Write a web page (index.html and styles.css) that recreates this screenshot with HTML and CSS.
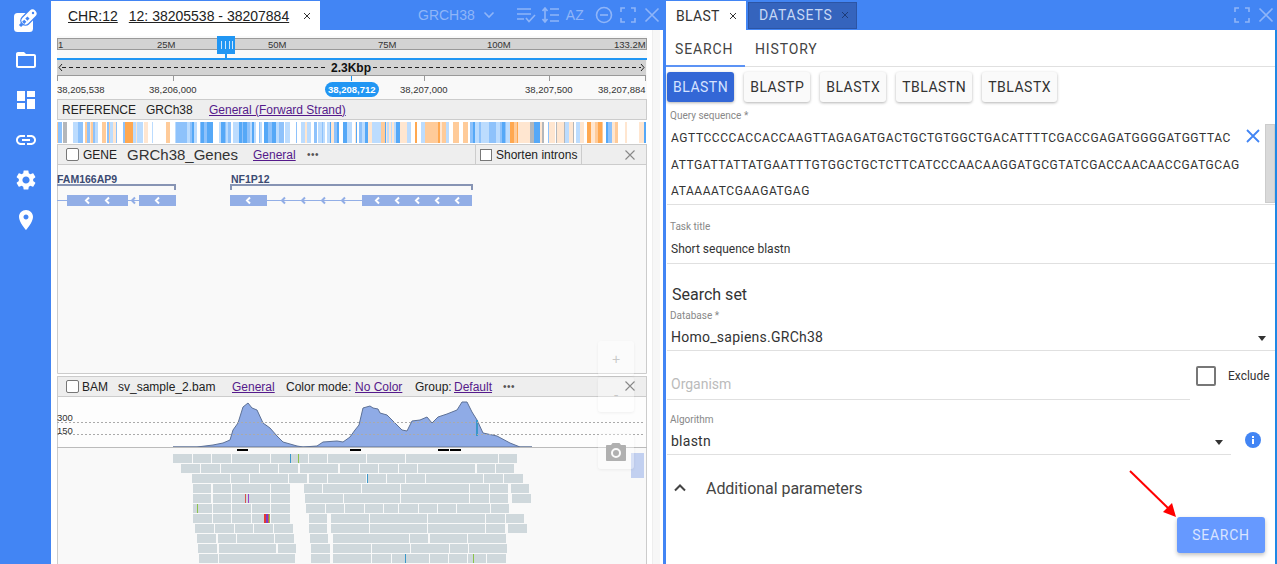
FILE: index.html
```html
<!DOCTYPE html>
<html lang="en">
<head>
  <meta charset="UTF-8" />
  <meta name="viewport" content="width=device-width, initial-scale=1.0"/>
  <title>NGB BLAST</title>
  <link rel="stylesheet" href="styles.css">
</head>
<body>

<nav class="sidebar">
  <svg class="logo" width="24" height="24" viewBox="0 0 24 24">
    <rect x="0" y="5" width="19" height="19" rx="3.500" fill="#fff"/>
    <path d="M11.500 12.500 L18.500 5.500" stroke="#4285f4" stroke-width="10.500" stroke-linecap="round"/>
    <path d="M11.500 12.500 L18.500 5.500" stroke="#fff" stroke-width="8" stroke-linecap="round"/>
    <path d="M6 18 L14.500 9.500" stroke="#4285f4" stroke-width="3" stroke-dasharray="3 1.500"/>
    <circle cx="19" cy="5" r="1.200" fill="#4285f4"/>
  </svg>
  <svg class="nav-icon" viewBox="0 0 24 24"><path d="M10 4H4c-1.1 0-2 .9-2 2v12c0 1.1.9 2 2 2h16c1.1 0 2-.9 2-2V8c0-1.1-.9-2-2-2h-8l-2-2zM20 18H4V8h16v10z"/></svg>
  <svg class="nav-icon" viewBox="0 0 24 24"><path d="M3 13h8V3H3v10zm0 8h8v-6H3v6zm10 0h8V11h-8v10zm0-18v6h8V3h-8z"/></svg>
  <svg class="nav-icon" viewBox="0 0 24 24"><path d="M3.9 12c0-1.71 1.39-3.1 3.1-3.1h4V7H7c-2.76 0-5 2.24-5 5s2.24 5 5 5h4v-1.9H7c-1.71 0-3.1-1.39-3.1-3.1zM8 13h8v-2H8v2zm9-6h-4v1.9h4c1.71 0 3.1 1.39 3.1 3.1s-1.39 3.1-3.1 3.1h-4V17h4c2.76 0 5-2.24 5-5s-2.24-5-5-5z"/></svg>
  <svg class="nav-icon" viewBox="0 0 24 24"><path d="M19.14 12.94c.04-.3.06-.61.06-.94 0-.32-.02-.64-.07-.94l2.03-1.58c.18-.14.23-.41.12-.61l-1.92-3.32c-.12-.22-.37-.29-.59-.22l-2.39.96c-.5-.38-1.03-.7-1.62-.94l-.36-2.54c-.04-.24-.24-.41-.48-.41h-3.84c-.24 0-.43.17-.47.41l-.36 2.54c-.59.24-1.13.57-1.62.94l-2.39-.96c-.22-.08-.47 0-.59.22L2.74 8.87c-.12.21-.08.47.12.61l2.03 1.58c-.05.3-.09.63-.09.94s.02.64.07.94l-2.03 1.58c-.18.14-.23.41-.12.61l1.92 3.32c.12.22.37.29.59.22l2.39-.96c.5.38 1.03.7 1.62.94l.36 2.54c.05.24.24.41.48.41h3.84c.24 0 .44-.17.47-.41l.36-2.54c.59-.24 1.13-.56 1.62-.94l2.39.96c.22.08.47 0 .59-.22l1.92-3.32c.12-.22.07-.47-.12-.61l-2.01-1.58zM12 15.6c-1.98 0-3.6-1.62-3.6-3.6s1.62-3.6 3.6-3.6 3.6 1.62 3.6 3.6-1.62 3.6-3.6 3.6z"/></svg>
  <svg class="nav-icon" viewBox="0 0 24 24"><path d="M12 2C8.13 2 5 5.13 5 9c0 5.25 7 13 7 13s7-7.75 7-13c0-3.87-3.13-7-7-7zm0 9.5c-1.38 0-2.5-1.12-2.5-2.5s1.12-2.5 2.5-2.5 2.5 1.12 2.5 2.5-1.12 2.5-2.5 2.5z"/></svg>
</nav>

<main class="browser">
  <div class="topbar">
    <div class="browser-tab">
      <span class="tab-link">CHR:12</span>
      <span class="tab-link">12: 38205538 - 38207884</span>
      <svg class="tab-x" viewBox="0 0 10 10"><path d="M2 2 L8 8 M8 2 L2 8"/></svg>
    </div>
    <span class="ref-name">GRCH38</span>
    <svg class="tool chevron" viewBox="0 0 12 8"><path d="M1.5 1.5 L6 6 L10.5 1.5"/></svg>
    <svg class="tool tool-sort" viewBox="0 0 20 16"><path d="M1 2 H15 M1 7 H15 M1 12 H8 M10 11 L13 14.5 L19 8"/></svg>
    <svg class="tool tool-spacing" viewBox="0 0 18 16"><path d="M3 1 V15 M0.5 4 L3 1 L5.500 4 M0.500 12 L3 15 L5.500 12 M8 2 H17 M8 8 H17 M8 14 H17"/></svg>
    <span class="tool-az">AZ</span>
    <svg class="tool tool-minus" viewBox="0 0 18 18"><circle cx="9" cy="9" r="7.500"/><path d="M5 9 H13"/></svg>
    <svg class="tool tool-full" viewBox="0 0 16 16"><path d="M1 5 V1 H5 M11 1 H15 V5 M15 11 V15 H11 M5 15 H1 V11"/></svg>
    <svg class="tool tool-close" viewBox="0 0 16 16"><path d="M1.500 1.500 L14.500 14.500 M14.500 1.500 L1.500 14.500"/></svg>
  </div>

  <div class="workspace">
    <div class="tracks">
      <svg class="ruler" width="590" height="63" viewBox="57 36 590 63">
        <rect x="57" y="36" width="590" height="63" fill="#f9f9f9"/>
        <rect x="57.500" y="38.500" width="589" height="11" fill="#d3d3d3" stroke="#999"/>
        <g class="scale-text">
          <text x="58" y="48">1</text>
          <text x="157" y="48">25M</text>
          <text x="268" y="48">50M</text>
          <text x="378" y="48">75M</text>
          <text x="487" y="48">100M</text>
          <text x="614" y="48">133.2M</text>
        </g>
        <rect x="217" y="36" width="18" height="18" fill="#2196f3"/>
        <rect x="225" y="54" width="2" height="4" fill="#2196f3"/>
        <path d="M221.500 41 V49 M225.500 41 V49 M229.500 41 V49 M232.500 41 V49" stroke="#cfe6fb"/>
        <rect x="57" y="58" width="590" height="2" fill="#2196f3"/>
        <rect x="57" y="60" width="589" height="15" fill="#d3d3d3"/>
        <rect x="57" y="75" width="589" height="1" fill="#999"/>
        <path d="M62 67.500 H326 M373 67.500 H641" stroke="#222" stroke-dasharray="4 3"/>
        <path d="M62 64 L59 67.500 L62 71 M641 64 L644 67.500 L641 71" stroke="#222" fill="none"/>
        <text class="range-size" x="331" y="72">2.3Kbp</text>
        <path d="M57.500 76 V81 M173.500 76 V81 M424.500 76 V81 M549.500 76 V81 M645.500 76 V81" stroke="#999"/>
        <path d="M351.500 76 V81" stroke="#2196f3"/>
        <g class="scale-text">
          <text x="57" y="93">38,205,538</text>
          <text x="149" y="93">38,206,000</text>
          <text x="400" y="93">38,207,000</text>
          <text x="525" y="93">38,207,500</text>
          <text x="598" y="93">38,207,884</text>
        </g>
        <rect x="325" y="82" width="54" height="15" rx="7.500" fill="#2196f3"/>
        <text class="pill-text" x="328" y="93">38,208,712</text>
      </svg>

      <div class="track-head ref-head">
        <span class="w-ref">REFERENCE</span>
        <span class="w-ref-name">GRCh38</span>
        <a class="link">General (Forward Strand)</a>
      </div>
      <svg id="stripes" class="stripes" width="590" height="22" viewBox="57 122 590 22"></svg>

      <div class="track-head gene-head">
        <span class="check"></span>
        <span class="w-gene">GENE</span>
        <span class="gene-name">GRCh38_Genes</span>
        <a class="link w-general">General</a>
        <span class="dots">•••</span>
        <div class="shorten"><span class="check small"></span>Shorten introns</div>
        <div class="head-close"><svg class="x-grey" viewBox="0 0 10 10"><path d="M0.500 0.500 L9.500 9.500 M9.500 0.500 L0.500 9.500"/></svg></div>
      </div>

      <svg class="gene-track" width="590" height="209" viewBox="57 165 590 209">
        <path d="M57.500 165 V373.500 H646.500 V165" fill="none" stroke="#ccc"/>
        <text class="gene-label" x="57" y="183">FAM166AP9</text>
        <path class="bracket" d="M57 185 H175 V190"/>
        <path d="M57 200.500 H139" stroke="#92aee6"/>
        <rect x="67" y="195" width="61" height="11" fill="#92aee6"/>
        <rect x="139" y="195" width="37" height="11" fill="#92aee6"/>
        <text class="gene-label" x="231" y="183">NF1P12</text>
        <path class="bracket" d="M231 190 V185 H472 V190"/>
        <path d="M230 200.500 H362" stroke="#92aee6"/>
        <rect x="230" y="195" width="37" height="11" fill="#92aee6"/>
        <rect x="362" y="195" width="110" height="11" fill="#92aee6"/>
        <path class="chev white" d="M89 197.500 L86 200.500 L89 203.500 M109 197.500 L106 200.500 L109 203.500 M159 197.500 L156 200.500 L159 203.500 M250 197.500 L247 200.500 L250 203.500 M379 197.500 L376 200.500 L379 203.500 M399 197.500 L396 200.500 L399 203.500 M419 197.500 L416 200.500 L419 203.500 M439 197.500 L436 200.500 L439 203.500 M459 197.500 L456 200.500 L459 203.500"/>
        <path class="chev blue" d="M135 197.500 L132 200.500 L135 203.500 M285 197.500 L282 200.500 L285 203.500 M305 197.500 L302 200.500 L305 203.500 M325 197.500 L322 200.500 L325 203.500 M345 197.500 L342 200.500 L345 203.500"/>
      </svg>

      <div class="track-head bam-head">
        <span class="check"></span>
        <span class="w-bam">BAM</span>
        <span class="w-file">sv_sample_2.bam</span>
        <a class="link w-general2">General</a>
        <span class="w-mode">Color mode:</span>
        <a class="link w-color">No Color</a>
        <span class="w-group">Group:</span>
        <a class="link w-default">Default</a>
        <span class="dots">•••</span>
      </div>

      <svg id="bam" class="bam-track" width="590" height="167" viewBox="57 397 590 167">
        <path d="M57.500 397 V564 M646.500 397 V564" stroke="#ccc"/>
        <rect x="58" y="397" width="588" height="50" fill="#fdfdfd"/>
        <polygon fill="#8fabe6" stroke="#5d7196" points="173,447 197,447 205,446 213,445 223,443 230,440 233,430 238,423 243,407 248,403 252,408 257,410 263,423 270,428 277,436 283,442 297,446 303,447 317,446 323,442 337,441 343,442 350,437 355,430 359,425 363,408 370,406 373,408 378,409 380,413 387,415 395,423 402,430 407,431 412,421 420,420 427,417 432,423 438,417 447,414 457,410 462,402 467,402 472,412 477,420 483,433 497,436 510,443 520,447 532,447"/>
        <rect x="476" y="420" width="2" height="16" fill="#3b97c9"/>
        <path d="M57 422.500 H643 M57 434.500 H643" stroke="#aaa" stroke-dasharray="2 2"/>
        <text class="scale-text" x="57" y="421">300</text>
        <text class="scale-text" x="57" y="434">150</text>
        <rect x="57" y="447" width="590" height="1" fill="#bbb"/>
        <path d="M237 450 H248 M350 450 H361 M438 450 H449 M450 450 H461" stroke="#000" stroke-width="2"/>
        <rect x="631" y="453" width="13" height="25" fill="#c2d0f0"/>
      </svg>

      <!-- floating zoom widget -->
      <div class="zoom-panel">
        <div class="zoom-btn">+</div>
        <div class="zoom-btn">-</div>
        <div class="zoom-btn camera">
          <svg width="20" height="18" viewBox="0 0 20 18"><path fill="#b0b0b0" d="M6.500 0 L5 2 H1 C.4 2 0 2.500 0 3 V17 C0 17.500 .4 18 1 18 H19 C19.600 18 20 17.500 20 17 V3 C20 2.500 19.600 2 19 2 H15 L13.500 0 Z M10 5 A5 5 0 1 1 10 15 A5 5 0 1 1 10 5 Z M10 7 A3 3 0 1 0 10 13 A3 3 0 1 0 10 7 Z"/></svg>
        </div>
      </div>
      <svg class="x-grey bam-close" viewBox="0 0 10 10"><path d="M0.500 0.500 L9.500 9.500 M9.500 0.500 L0.500 9.500"/></svg>
    </div>
    <div class="track-scroll"></div>
  </div>
</main>

<section class="blast">
  <div class="topbar blast-top">
    <div class="blast-tab">BLAST <svg class="tab-x" viewBox="0 0 10 10"><path d="M2 2 L8 8 M8 2 L2 8"/></svg></div>
    <div class="data-tab">DATASETS <svg class="tab-x dim" viewBox="0 0 10 10"><path d="M2 2 L8 8 M8 2 L2 8"/></svg></div>
    <svg class="tool tool-full right" viewBox="0 0 16 16"><path d="M1 5 V1 H5 M11 1 H15 V5 M15 11 V15 H11 M5 15 H1 V11"/></svg>
    <svg class="tool tool-close" viewBox="0 0 16 16"><path d="M1.500 1.500 L14.500 14.500 M14.500 1.500 L1.500 14.500"/></svg>
  </div>
  <div class="subtabs">
    <div class="subtab active">SEARCH</div>
    <div class="subtab">HISTORY</div>
  </div>
  <div class="form">
    <div class="modes">
      <button class="mode active">BLASTN</button>
      <button class="mode">BLASTP</button>
      <button class="mode">BLASTX</button>
      <button class="mode">TBLASTN</button>
      <button class="mode">TBLASTX</button>
    </div>
    <div class="field query">
      <label>Query sequence *</label>
      <div class="query-text">
        <div>AGTTCCCCACCACCAAGTTAGAGATGACTGCTGTGGCTGACATTTTCGACCGAGATGGGGATGGTTAC</div>
        <div>ATTGATTATTATGAATTTGTGGCTGCTCTTCATCCCAACAAGGATGCGTATCGACCAACAACCGATGCAG</div>
        <div>ATAAAATCGAAGATGAG</div>
      </div>
      <svg class="query-clear" viewBox="0 0 14 14"><path d="M1 1 L13 13 M13 1 L1 13"/></svg>
      <div class="query-scroll"></div>
    </div>
    <div class="field task">
      <label>Task title</label>
      <div class="value small">Short sequence blastn</div>
    </div>
    <h3 class="set-title">Search set</h3>
    <div class="field database">
      <label>Database *</label>
      <div class="value">Homo_sapiens.GRCh38<span class="caret"></span></div>
    </div>
    <div class="organism-row">
      <div class="organism">Organism</div>
      <span class="big-check"></span>
      <span class="exclude">Exclude</span>
    </div>
    <div class="algo-row">
      <div class="field algo">
        <label>Algorithm</label>
        <div class="value">blastn<span class="caret"></span></div>
      </div>
      <svg class="info" viewBox="0 0 16 16"><circle cx="8" cy="8" r="8" fill="#4285f4"/><rect x="7" y="7" width="2" height="5" fill="#fff"/><rect x="7" y="4" width="2" height="2" fill="#fff"/></svg>
    </div>
    <div class="additional">
      <svg class="up" viewBox="0 0 12 8"><path d="M1 6.500 L6 1.500 L11 6.500"/></svg>
      Additional parameters
    </div>
    <div class="actions"><button class="search-btn">SEARCH</button></div>
  </div>
</section>

<svg class="red-arrow" width="52" height="50" viewBox="0 0 52 50">
  <path d="M1 1 L40 39" stroke="#f00" stroke-width="2"/>
  <path d="M47 47 L34 42 L43 33 Z" fill="#f00"/>
</svg>

<script src="script.js"></script>
</body>
</html>
```

FILE: styles.css
```css
* { box-sizing: border-box; }
body {
  margin: 0; height: 100vh; display: flex; overflow: hidden;
  background: white; font-family: "Liberation Sans", Arial, sans-serif; color: #222;
}

/* left nav */
.sidebar {
  width: 51px; flex: none; background: #4285f4;
  display: flex; flex-direction: column; align-items: center;
  padding-top: 8px;
}
.logo { margin-bottom: 16px; flex: none; }
.nav-icon { width: 24px; height: 24px; fill: white; margin-bottom: 16px; flex: none; }

/* shared header bar */
.topbar {
  height: 30px; background: #4285f4; display: flex; align-items: center; flex: none;
}
.tool { fill: none; stroke: #8fb5f8; stroke-width: 1.6; flex: none; }

.browser { width: 612px; flex: none; display: flex; flex-direction: column; }
.browser-tab {
  width: 269px; height: 29px; margin-top: 1px; background: white;
  display: flex; align-items: center; padding-left: 17px; font-size: 14px; color: #222;
}
.tab-link { text-decoration: underline; margin-right: 11px; }
.tab-x { width: 10px; height: 10px; fill: none; stroke: #333; stroke-width: 1; flex: none; }
.browser-tab .tab-x { margin-left: 2px; }
.ref-name { margin-left: 98px; font-size: 14px; color: #8fb5f8; }
.chevron { width: 12px; height: 8px; margin-left: 8px; }
.tool-sort { width: 20px; height: 16px; margin-left: 21px; }
.tool-spacing { width: 18px; height: 16px; margin-left: 6px; }
.tool-az { font-size: 14px; color: #8fb5f8; margin-left: 6px; width: 19px; }
.tool-minus { width: 18px; height: 18px; margin-left: 10px; }
.tool-full { width: 16px; height: 16px; margin-left: 7px; }
.tool-close { width: 16px; height: 16px; margin-left: 8px; }

.workspace { flex: 1; display: flex; min-height: 0; }
.tracks { width: 601px; padding: 6px 5px 0 6px; position: relative; background: white; }
.track-scroll { width: 8px; background: #f7f7f7; border-left: 1px solid #eee; }
.ruler, .stripes, .gene-track, .bam-track { display: block; }

.track-head {
  width: 590px; height: 21px; background: #eee; border: 1px solid #ccc;
  display: flex; align-items: center; font-size: 12px; white-space: nowrap;
}
.ref-head { padding-left: 4px; margin-bottom: 2px; }
.w-ref { width: 84px; }
.w-ref-name { width: 63px; }
.link { color: #551a8b; text-decoration: underline; }
.gene-head { padding-left: 8px; }
.check {
  width: 13px; height: 13px; background: white; border: 1px solid #777; border-radius: 2px; flex: none;
}
.w-gene { margin-left: 4px; width: 44px; }
.gene-name { font-size: 15px; width: 126px; color: #333; }
.w-general { width: 54px; }
.dots { font-size: 10px; color: #555; letter-spacing: 0.500px; }
.shorten {
  margin-left: 156px; width: 107px; height: 100%; border-left: 1px solid #ccc; border-right: 1px solid #ccc;
  display: flex; align-items: center; padding-left: 4px; gap: 4px;
}
.check.small { width: 12px; height: 12px; border-radius: 0; }
.head-close { flex: 1; display: flex; justify-content: flex-end; padding-right: 11px; }
.x-grey { width: 10px; height: 10px; fill: none; stroke: #888; stroke-width: 1.100; }

.gene-track { background: #f9f9f9; }
.gene-label { font: bold 10.500px "Liberation Sans", Arial, sans-serif; fill: #3b4a72; }
.bracket { fill: none; stroke: #8794b4; stroke-width: 2; }
.chev { fill: none; stroke-width: 2; }
.chev.white { stroke: white; }
.chev.blue { stroke: #92aee6; }

.bam-head { padding-left: 8px; margin-top: 2px; }
.w-bam { margin-left: 3px; width: 36px; }
.w-file { width: 114px; }
.w-general2 { width: 54px; }
.w-mode { width: 69px; }
.w-color { width: 60px; }
.w-group { width: 39px; }
.w-default { width: 49px; }

.bam-track { background: #f9f9f9; }
.scale-text text, text.scale-text { font: 9.500px "Liberation Sans", Arial, sans-serif; fill: #333; }
.range-size { font: bold 12px "Liberation Sans", Arial, sans-serif; fill: #111; }
.pill-text { font: bold 9.500px "Liberation Sans", Arial, sans-serif; fill: white; }

/* over the tracks */
.zoom-panel { position: absolute; left: 547px; top: 311px; width: 36px; display: flex; flex-direction: column; }
.zoom-btn {
  height: 35px; margin-bottom: 1px; border-radius: 3px;
  background: rgba(255,255,255,0.35); box-shadow: 0 1px 3px rgba(0,0,0,0.06);
  display: flex; align-items: center; justify-content: center; color: #c8c8c8; font-size: 14px;
}
.zoom-btn.camera { margin-top: 21px; }
.bam-close { position: absolute; left: 574px; top: 351px; }

/* blast panel */
.blast {
  flex: 1; min-width: 0; display: flex; flex-direction: column;
  border-left: 3px solid #4285f4; border-right: 2px solid #1e88e5;
  font-family: Roboto, sans-serif; color: #333;
}
.blast-top { margin-right: -2px; }
.blast-tab {
  width: 80px; height: 29px; margin-top: 1px; background: white; font-size: 14px; letter-spacing: 0.300px;
  display: flex; align-items: center; padding-left: 10px; gap: 8px;
}
.data-tab {
  width: 109px; height: 27px; margin-left: 2px; background: #3564bd; border: 1px solid #2c55a5;
  color: #c7d8f5; font-size: 14px; letter-spacing: 0.800px;
  display: flex; align-items: center; padding-left: 10px; gap: 7px;
}
.tab-x.dim { stroke: #1d3b78; }
.tool-full.right { margin-left: auto; }
.blast-top .tool-close { margin-right: 3px; }

.subtabs { height: 37px; display: flex; border-bottom: 1px solid #e0e0e0; flex: none; }
.subtab { width: 79px; padding-left: 9px; font-size: 14px; line-height: 38px; letter-spacing: 0.850px; color: #444; }
.subtab + .subtab { width: auto; padding-left: 10px; }
.subtab.active { border-bottom: 2px solid #5c93f5; height: 37px; }

.form { flex: 1; display: flex; flex-direction: column; padding: 5px 0 0 1px; min-height: 0; }
.modes { display: flex; gap: 10px; flex: none; }
.mode {
  height: 30px; padding: 0 6px; border: none; border-radius: 3px; background: #fafafa; color: #333;
  font: 14px Roboto, sans-serif; letter-spacing: 0.500px; box-shadow: 0 1px 3px rgba(0,0,0,0.3);
}
.mode.active { background: #3367d6; color: #d6e3ff; }

label { display: block; font-size: 10px; color: #888; }
.field { padding-left: 3px; border-bottom: 1px solid #e0e0e0; flex: none; }
.query { position: relative; margin-top: 8px; height: 95px; }
.query-text { font-size: 12px; line-height: 26.500px; color: #333; white-space: nowrap; padding: 4px 0 0 1px; letter-spacing: 0.570px; }
.query-clear { position: absolute; right: 15px; top: 19px; width: 14px; height: 14px; fill: none; stroke: #4285f4; stroke-width: 1.800; }
.query-scroll { position: absolute; right: 0; top: 14px; width: 10px; height: 79px; background: #d9d9d9; border: 1px solid #ccc; }
.task { margin-top: 16px; height: 43px; }
.value { font-size: 14px; letter-spacing: 0.250px; padding: 8px 0 0 1px; position: relative; color: #333; }
.value.small { font-size: 12px; letter-spacing: 0; padding-top: 10px; }
.set-title { font-size: 16px; font-weight: 400; margin: 21px 0 0 5px; line-height: 20px; flex: none; }
.database { height: 41px; margin-top: 5px; }
.caret {
  position: absolute; right: 9px; top: 15px; width: 0; height: 0;
  border-left: 4px solid transparent; border-right: 4px solid transparent; border-top: 5px solid #333;
}
.organism-row { display: flex; align-items: center; height: 49px; flex: none; }
.organism {
  width: 523px; height: 49px; padding: 25px 0 0 4px; font-size: 14px; color: #bbb; border-bottom: 1px solid #e0e0e0;
}
.big-check { width: 20px; height: 20px; border: 2px solid #777; border-radius: 2px; margin: 0 12px 0 6px; flex: none; }
.exclude { font-size: 12px; }
.algo-row { display: flex; margin-top: 14px; flex: none; }
.algo { width: 564px; height: 41px; }
.algo .caret { right: 8px; }
.info { width: 16px; height: 16px; margin: 18px 0 0 14px; flex: none; }
.additional { display: flex; align-items: center; font-size: 16px; margin-top: 23px; padding-left: 7px; height: 20px; color: #444; flex: none; letter-spacing: -0.050px; }
.up { width: 12px; height: 8px; fill: none; stroke: #444; stroke-width: 2; margin-right: 20px; }
.actions { display: flex; justify-content: flex-end; margin-top: 19px; padding-right: 10px; flex: none; }
.search-btn {
  width: 88px; height: 36px; border: none; border-radius: 3px; background: #6699ff; color: #d9e4ff;
  font: 14px Roboto, sans-serif; letter-spacing: 0.700px; box-shadow: 0 2px 4px rgba(0,0,0,0.25);
}
.red-arrow { position: absolute; left: 1129px; top: 470px; }
```

FILE: script.js
```js
// reference strip: stripes picked per region, same seed every run
const NS = 'http://www.w3.org/2000/svg';
const colors = {
  o: '#ffa850', p: '#ffcb99', q: '#ffe6d0', b: '#55a8f7', m: '#8ec2fb',
  l: '#bcdcfe', w: '#ffffff', g: '#b4b7bb', n: '#fdfdfd'
};
const regions = [
  [57, 'lwmwpwwoqwpglwwwmwwqp'], [120, 'wwlpqwwowlmlwwlqww'], [175, 'mblmlbmlwbmwlm'], [250, 'lbmlbmlbwml'],
  [290, 'wlwmqpwlmwlw'], [330, 'qwbmbwmlbqlp'], [360, 'lllbmllqpl'], [410, 'qwmlpqowp'],
  [448, 'wlpqwwlpw'], [470, 'bmlmbmlml'], [510, 'pqwoqpqw'], [530, 'gmblqwm'], [555, 'wlqwpmgpq'],
  [580, 'poqwwpoqw'], [600, 'pqwbwmqwpq']
];
let seed = 17;
function rnd() {
  seed = (seed * 16807) % 2147483647;
  return seed / 2147483647;
}
const stripes = document.getElementById('stripes');
let x = 57, r = 0;
while (x < 646) {
  if (r + 1 < regions.length && x >= regions[r + 1][0]) r++;
  const set = regions[r][1];
  const w = 1 + Math.floor(rnd() * 4);
  const rect = document.createElementNS(NS, 'rect');
  rect.setAttribute('x', x);
  rect.setAttribute('y', 122);
  rect.setAttribute('width', w);
  rect.setAttribute('height', 21);
  rect.setAttribute('fill', colors[set[Math.floor(rnd() * set.length)]]);
  stripes.appendChild(rect);
  x += w;
}

// read pile, one line per row: start-end pairs in page px
const reads = [
  '173-192 193-211 212-231 232-270 271-308 309-327 328-366 367-405 406-498 499-517',
  '181-200 201-220 221-259 260-278 279-298 300-338 340-359 360-378 379-398 399-417 418-475 477-495 496-514',
  '192-230 231-249 250-288 289-307 309-327 328-366 367-386 387-405 406-425 426-483 484-503 504-523',
  '193-211 213-231 232-270 271-290 304-322 323-361 362-400 401-469 470-489 490-508 511-529',
  '193-211 213-231 232-270 271-290 305-343 344-400 401-469 470-489 490-508 512-531',
  '193-212 213-231 232-251 252-270 271-290 306-325 326-344 345-364 365-383 384-398 399-418 419-437 438-456 457-490 491-509',
  '193-212 213-231 232-251 252-270 271-290 309-327 331-369 370-427 428-485 486-505 506-524',
  '195-214 215-234 235-253 254-273 274-293 309-327 331-369 370-427 428-485 486-505 508-527',
  '197-216 218-236 237-274 275-294 310-328 333-409 410-428 430-467 468-506',
  '198-217 219-276 278-296 311-330 333-371 372-410 411-449 450-468 469-507',
  '199-218 219-295 311-330 333-371 372-391 392-429 430-448 449-467 468-486 487-506'
];
// mismatches: row, x, width, colour
const marks = [
  [0, 290, 1, '#3b97c9'], [0, 298, 1, '#8bc34a'], [2, 367, 1, '#3b97c9'],
  [4, 245, 1, '#d9534f'], [4, 248, 1, '#9c3fc9'], [5, 197, 1, '#8bc34a'],
  [6, 264, 2, '#e53935'], [6, 266, 2, '#7b3fc9'], [6, 268, 1, '#d9534f'], [6, 269, 1, '#8bc34a'],
  [10, 405, 1, '#3b97c9'], [10, 473, 1, '#8bc34a']
];
const bam = document.getElementById('bam');
function addRect(left, top, w, h, fill) {
  const rect = document.createElementNS(NS, 'rect');
  rect.setAttribute('x', left);
  rect.setAttribute('y', top);
  rect.setAttribute('width', w);
  rect.setAttribute('height', h);
  rect.setAttribute('fill', fill);
  bam.appendChild(rect);
}
reads.forEach((row, i) => {
  row.split(' ').forEach(part => {
    const [a, b] = part.split('-').map(Number);
    addRect(a, 454 + i * 10, b - a, 9, '#cfd8dc');
  });
});
marks.forEach(m => addRect(m[1], 454 + m[0] * 10, m[2], 9, m[3]));
```
